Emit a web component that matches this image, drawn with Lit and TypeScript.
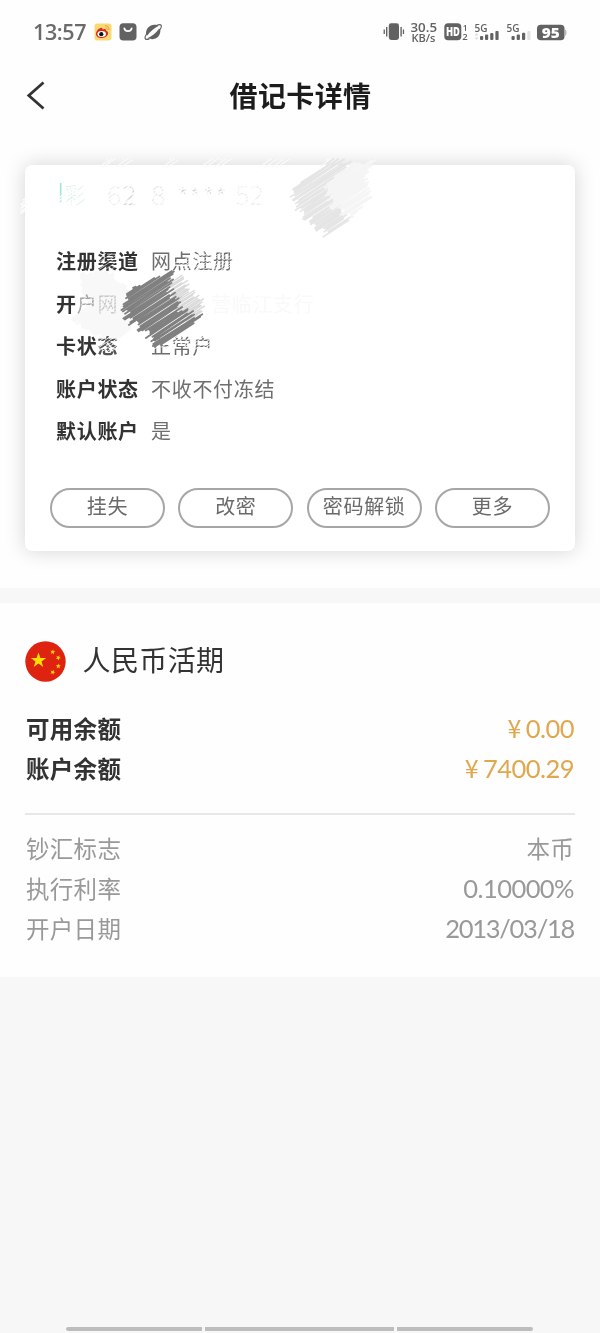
import { LitElement, html, css, svg } from "lit";
import { customElement } from "lit/decorators.js";

type Pt = [number, number];

// Repeatable pseudo-random numbers, so that the brush marks keep their shape.
function rng(seed: number) {
  let s = seed * 7919;
  return () => {
    s = (s * 16807) % 2147483647;
    return s / 2147483647;
  };
}

// Hatches a polygon with slanted bristle strokes; the ends run over its edge by up to `rough`.
function hatch(poly: Pt[], angle: number, step: number, rough: number, seed: number): string {
  const r = rng(seed);
  const c = Math.cos(angle), s = Math.sin(angle);
  const rot = poly.map(([x, y]) => [x * c + y * s, -x * s + y * c] as Pt);
  const lo = Math.min(...rot.map((p) => p[1]));
  const hi = Math.max(...rot.map((p) => p[1]));
  let d = "";
  for (let v = lo; v <= hi; v += step) {
    const xs: number[] = [];
    rot.forEach((a, i) => {
      const b = rot[(i + 1) % rot.length];
      if (a[1] <= v !== b[1] <= v) xs.push(a[0] + ((v - a[1]) / (b[1] - a[1])) * (b[0] - a[0]));
    });
    if (xs.length < 2) continue;
    const u1 = Math.min(...xs) + (r() - 0.5) * rough;
    const u2 = Math.max(...xs) + (r() - 0.5) * rough;
    const w = v + (r() - 0.5) * 0.8;
    const p = (u: number, q: number) => `${(u * c - q * s).toFixed(1)} ${(u * s + q * c).toFixed(1)}`;
    d += `M${p(u1, w)}L${p(u2, w + (r() - 0.5) * 1.2)}`;
  }
  return d;
}

const SLANT = -0.58;

@customElement("status-bar")
export class StatusBar extends LitElement {
  static styles = css`
    :host { display: flex; align-items: center; height: 64px; padding: 0 33px; box-sizing: border-box; color: #626262; }
    .time { font: 600 21.5px/24px "Open Sans", sans-serif; width: 61px; letter-spacing: -0.4px; color: #6a6a6a; }
    svg { display: block; flex: none; }
    .spacer { flex: 1; }
    text { font-family: "Open Sans", sans-serif; font-weight: 600; }
    .heavy { font-weight: 800; }
  `;
  render() {
    return html`
      <span class="time">13:57</span>
      <svg width="70" height="24" viewBox="94 20 70 24">
        <rect x="94.5" y="23.5" width="17" height="17" rx="3" fill="#f9d974" />
        <path d="M96 34c0-3 3-6 5.3-6.2 1.2 0 1.2 1 1 1.7 1.600-.8 4-.8 3.700 1.300 1.700.6 2.400 1.700 2 3.200-.7 2.600-3.600 4-6.500 4-3 0-5.500-1.500-5.500-4z" fill="#d82a1c" />
        <ellipse cx="101.700" cy="34" rx="4.300" ry="2.900" fill="#fff" />
        <circle cx="101.300" cy="34.200" r="2.100" fill="#111" />
        <path d="M105 25.800c2.600-.3 4.300 1.600 4 4M105.500 28c1.200 0 1.800.6 1.800 1.800" fill="none" stroke="#eb9a35" stroke-width="1" />
        <rect x="119.500" y="23.200" width="17" height="17.300" rx="3.800" fill="#626262" />
        <path d="M124.300 28.300c.8 3.800 6.600 3.800 7.400 0" fill="none" stroke="#fff" stroke-width="1.700" stroke-linecap="round" />
        <g transform="translate(153.200 32)" fill="#626262">
          <path d="M-7 2.500C-8-3-3.500-7.300 1-7.300c2 0 3.200.4 4.300 1.200C2-4.500-3-1-6 3.500z" />
          <path d="M7-2.500C8 3 3.500 7.300-1 7.300c-2 0-3.200-.4-4.300-1.200C-2 4.500 3 1 6-3.500z" />
          <path d="M-5.500.5c-2.300 3-3.200 5.500-2.200 6.500.7.700 2.200.5 4-.4M5.500-.5c2.300-3 3.200-5.500 2.200-6.500-.7-.7-2.200-.5-4 .4" fill="none" stroke="#626262" stroke-width="1.200" />
        </g>
      </svg>
      <span class="spacer"></span>
      <svg width="186" height="28" viewBox="381 18 186 28">
        <g fill="#626262">
          <rect x="388.800" y="23.300" width="10.200" height="16.700" rx="2.400" />
          <path d="M386 27h1.400v9.500H386zM383.600 29.500h1.300v4.500h-1.300zM400.400 27h1.400v9.500h-1.400zM402.800 29.500h1.300v4.500h-1.300z" />
          <text x="410.500" y="31.600" font-size="12" textLength="26.500" lengthAdjust="spacingAndGlyphs">30.5</text>
          <text x="411.500" y="41.500" font-size="10.500" textLength="24" lengthAdjust="spacingAndGlyphs">KB/s</text>
          <rect x="444.300" y="23.300" width="17" height="17" rx="3.800" />
          <text x="462.700" y="30.500" font-size="8.500">1</text>
          <text x="462.300" y="40" font-size="9.500">2</text>
          <text x="474.500" y="31.600" font-size="11.500" textLength="13" lengthAdjust="spacingAndGlyphs">5G</text>
          <text x="506.500" y="31.600" font-size="11.500" textLength="13" lengthAdjust="spacingAndGlyphs">5G</text>
          <rect x="480" y="36" width="3.200" height="4" rx="1" />
          <rect x="485" y="34.500" width="3.200" height="5.500" rx="1" />
          <rect x="490.200" y="33" width="3.200" height="7" rx="1" />
          <rect x="495.400" y="31" width="3.200" height="9" rx="1" />
          <rect x="511.500" y="36" width="3.200" height="4" rx="1" />
          <rect x="516.700" y="34.500" width="3.200" height="5.500" rx="1" />
          <rect x="522" y="32.700" width="3.200" height="7.300" rx="1" />
          <rect x="527.300" y="31" width="3.200" height="9" rx="1" fill="#e2e2e2" />
          <path d="M474.500 35.500h4l-2-2.500zM474.500 37.500h4l-2 2.500z" fill="#ddd" />
          <rect x="537" y="24.700" width="27.500" height="15.600" rx="3.800" />
          <path d="M565.200 29.500c1.600.3 1.600 6 0 6.300z" fill="#aaa" />
        </g>
        <g fill="#fff">
          <text class="heavy" x="445.900" y="36" font-size="11.500" textLength="14" lengthAdjust="spacingAndGlyphs">HD</text>
          <text class="heavy" x="541.800" y="37.700" font-size="14" textLength="18" lengthAdjust="spacingAndGlyphs">95</text>
        </g>
      </svg>
    `;
  }
}

@customElement("app-root")
export class AppRoot extends LitElement {
  static styles = css`
    :host { display: block; }
    .page {
      position: relative; display: flex; flex-direction: column; height: 1333px; width: 600px; overflow: hidden;
      background: #f7f7f7; color: #333; font-family: "Noto Sans CJK SC", sans-serif;
    }
    .top { background: #fefefe; height: 588px; box-sizing: border-box; }
    .nav { display: grid; grid-template-columns: 80px 1fr 80px; align-items: center; height: 64px; }
    .back { margin-left: 25px; display: block; }
    .title { margin: 0; padding: 0 0 3px 1px; text-align: center; font-size: 28px; line-height: 40px; font-weight: 700; color: #1c1c1c; letter-spacing: 0.35px; }
    .card {
      margin: 37px 25px 0; height: 386px; box-sizing: border-box; padding: 75px 25px 23px; border-radius: 7px;
      background: #fff; box-shadow: 0 0 20px rgba(0, 0, 0, 0.17);
      display: flex; flex-direction: column; justify-content: space-between;
    }
    .rows { display: flex; flex-direction: column; padding-left: 6px; }
    .row { display: flex; height: 42.500px; align-items: center; font-size: 20px; letter-spacing: 0.700px; line-height: 30px; }
    .row .k { width: 95px; font-weight: 700; }
    .row .v { color: #6e6e6e; }
    .row .faint { color: #f9f9f9; padding-left: 60px; }
    .row .light { color: #a8a8a8; font-weight: 400; }
    .row .pale { color: #cfcfcf; font-weight: 400; }
    .row .half { color: #555; }
    .buttons { display: grid; grid-template-columns: repeat(4, 115px); justify-content: space-between; }
    button {
      height: 40px; border: 2px solid #a6a6a6; border-radius: 20px; background: none; padding: 0 0 4px; color: #6a6a6a;
      font: 400 20px/30px "Noto Sans CJK SC", sans-serif; letter-spacing: 0.700px; white-space: nowrap;
    }
    .account { margin-top: 15px; background: #fefefe; height: 374px; box-sizing: border-box; padding: 38px 25px 0; }
    .currency { display: flex; align-items: center; gap: 17px; height: 41px; font-size: 28px; letter-spacing: 0.400px; }
    .currency svg { margin-left: -0.500px; }
    .currency span { padding-bottom: 5px; }
    .line { display: flex; justify-content: space-between; align-items: center; height: 40px; font-size: 23.500px; letter-spacing: 0.300px; padding: 0 1px 1px; box-sizing: border-box; }
    .balance { margin-top: 26px; }
    .balance .k { font-weight: 700; }
    .num { font-family: Lato, "Noto Sans CJK SC", sans-serif; font-size: 25.500px; letter-spacing: -0.550px; }
    .date { letter-spacing: -1.250px; }
    .money { color: #e0a84e; }
    .money b { font: 400 25px "Noto Sans CJK SC", sans-serif; line-height: 1; margin-right: 5px; }
    .extra { border-top: 2px solid #e8e8e8; margin-top: 25px; padding-top: 13px; color: #999; }
    .homebar { margin-top: auto; display: grid; grid-template-columns: 136px 189px 136px; gap: 3px; justify-content: center; padding: 0 1px 2px 0; }
    .homebar i { height: 4px; background: #bdbdbd; }
    .homebar i:first-child { border-radius: 2px 0 0 2px; }
    .homebar i:last-child { border-radius: 0 2px 2px 0; }
    .marks { position: absolute; left: 0; top: 140px; pointer-events: none; }
    .ghost { font: 300 27px "Noto Sans CJK SC", sans-serif; }
    .wash { mix-blend-mode: multiply; }
  `;

  private stroke(poly: Pt[], color: string, width: number, step: number, rough: number, seed: number, opacity = 1) {
    return svg`<path d=${hatch(poly, SLANT, step, rough, seed)} fill="none" stroke=${color} stroke-width=${width} stroke-linecap="round" opacity=${opacity} />`;
  }

  private marks() {
    return html`
      <svg class="marks wash" width="600" height="230" viewBox="0 140 600 230">
        ${this.stroke([[82, 275], [105, 270], [126, 290], [130, 332], [115, 341], [90, 331], [73, 318], [88, 309]], "#f8f8f8", 3, 2, 6, 47)}
      </svg>
      <svg class="marks" width="600" height="230" viewBox="0 140 600 230">
        <g class="ghost" fill="#ececec">
          <text x="57" y="203" fill="#a5e6d0">I</text>
          <text x="64" y="203" font-size="22" fill="#d9f3ea">彩</text>
          <text x="107" y="205">6</text>
          <text x="122" y="205" fill="#d4d4d4">2</text>
          <text x="151" y="205" fill="#e6e6e6">8</text>
          <text x="177" y="208" fill="#d6d6d6">**</text>
          <text x="203" y="208" fill="#d6d6d6">**</text>
          <text x="235" y="205">52</text>
        </g>
        ${this.stroke([[55, 198], [80, 180], [285, 180], [285, 212], [60, 214]], "#fff", 1.5, 2.9, 14, 9, 0.9)}
        ${[97, 114, 160, 199, 212, 258, 270, 318, 358].map((x, i) =>
          this.stroke([[x, 167], [x + 10, 159], [x + 19, 159], [x + 10, 167]], "#fafafa", 1.2, 2.4, 5, 21 + i))}
        ${this.stroke([[21, 202], [26, 196], [27, 212], [22, 213]], "#fdfdfd", 1.3, 2, 4, 4)}
        ${this.stroke([[290, 190], [330, 161], [352, 162], [328, 188], [350, 220], [326, 235], [302, 212]], "#e5e5e5", 1.7, 1.7, 10, 31)}
        ${this.stroke([[325, 185], [352, 164], [370, 166], [364, 182], [371, 198], [352, 217], [334, 207]], "#f5f5f5", 2, 1.7, 8, 37)}
        ${this.stroke([[100, 254], [118, 253], [117, 270], [99, 272]], "#fff", 0.8, 3.2, 5, 41, 0.8)}
        ${this.stroke([[172, 262], [200, 252], [236, 252], [236, 272], [190, 274]], "#fff", 0.9, 2.4, 7, 43, 0.85)}
        ${this.stroke([[82, 297], [120, 294], [120, 312], [83, 314]], "#f9f9f9", 0.8, 2.8, 4, 46, 0.9)}
        ${this.stroke([[99, 338], [119, 336], [119, 350], [99, 352]], "#fdfdfd", 1, 2.6, 5, 51, 0.9)}
        ${this.stroke([[150, 334], [212, 335], [212, 352], [181, 346], [152, 349]], "#fff", 1, 2.5, 5, 53, 0.9)}
        ${this.stroke([[168, 279], [181, 277], [189, 290], [200, 298], [203, 311], [190, 321], [174, 307]], "#d9d9d9", 1.4, 1.7, 8, 59)}
        ${this.stroke([[123, 307], [133, 288], [172, 271], [168, 290], [181, 309], [202, 317], [182, 333], [157, 348], [146, 331], [131, 321]], "#808080", 1.8, 1.7, 11, 61)}
        ${this.stroke([[135, 302], [166, 284], [175, 308], [160, 330]], "#939393", 0.5, 2.3, 22, 67, 0.6)}
      </svg>`;
  }

  render() {
    const star = "M0-8l1.900 5.500h5.800l-4.700 3.400 1.800 5.600L0 3.100l-4.800 3.400 1.800-5.600-4.700-3.400h5.800z";
    return html`
      <main class="page">
        <section class="top">
          <status-bar></status-bar>
          <header class="nav">
            <svg class="back" width="24" height="30" viewBox="0 0 24 30">
              <path d="M18.500 1.500L3.800 14.500l14.700 13" fill="none" stroke="#333" stroke-width="2.800" />
            </svg>
            <h1 class="title">借记卡详情</h1>
          </header>
          <div class="card">
            <div class="rows">
              <div class="row"><span class="k">注册渠道</span><span class="v">网点注册</span></div>
              <div class="row"><span class="k">开<span class="light">户</span><span class="pale">网</span></span><span class="v faint">营临江支行</span></div>
              <div class="row"><span class="k">卡状<span class="half">态</span></span><span class="v">正常户</span></div>
              <div class="row"><span class="k">账户状态</span><span class="v">不收不付冻结</span></div>
              <div class="row"><span class="k">默认账户</span><span class="v">是</span></div>
            </div>
            <div class="buttons">
              ${["挂失", "改密", "密码解锁", "更多"].map((t) => html`<button>${t}</button>`)}
            </div>
          </div>
        </section>
        <section class="account">
          <div class="currency">
            <svg width="41" height="41" viewBox="0 0 41 41">
              <circle cx="20.500" cy="20.500" r="20.200" fill="#de2310" />
              <g fill="#ffdf00">
                <path transform="translate(13.500 19.500)" d=${star} />
                ${[[27.700, 11, 10], [33.300, 16.700, 25], [33.300, 25.200, 0], [27.700, 31.200, 20]].map(
                  ([x, y, a]) => svg`<path transform="translate(${x} ${y}) rotate(${a}) scale(.34)" d=${star} />`)}
              </g>
            </svg>
            <span>人民币活期</span>
          </div>
          <div class="balance">
            <div class="line"><span class="k">可用余额</span><span class="num money"><b>¥</b>0.00</span></div>
            <div class="line"><span class="k">账户余额</span><span class="num money"><b>¥</b>7400.29</span></div>
          </div>
          <div class="extra">
            <div class="line"><span>钞汇标志</span><span>本币</span></div>
            <div class="line"><span>执行利率</span><span class="num">0.10000%</span></div>
            <div class="line"><span>开户日期</span><span class="num date">2013/03/18</span></div>
          </div>
        </section>
        <div class="homebar"><i></i><i></i><i></i></div>
        ${this.marks()}
      </main>
    `;
  }
}
